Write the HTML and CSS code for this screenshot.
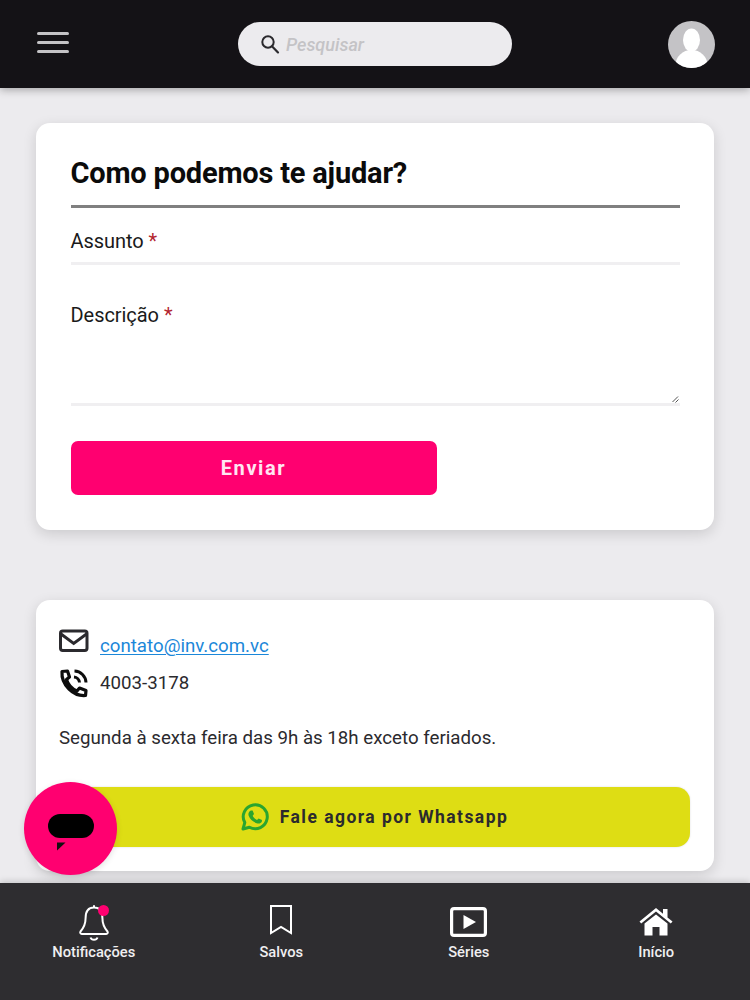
FILE: index.html
```html
<!DOCTYPE html>
<html lang="pt">
<head>
<meta charset="utf-8">
<title>Como podemos te ajudar?</title>
<link rel="stylesheet" href="styles.css">
</head>
<body>
<div class="app">
  <header class="topbar">
    <div class="burger"><span></span><span></span><span></span></div>
    <div class="search">
      <svg class="search-icon" width="20" height="20" viewBox="0 0 20 20"><circle cx="8" cy="8" r="5.7" fill="none" stroke="#2b2a2e" stroke-width="2"/><path d="M12.2 12.4 L18 18.4" stroke="#2b2a2e" stroke-width="2.2" stroke-linecap="round"/></svg>
      <span class="search-text">Pesquisar</span>
    </div>
    <svg class="avatar" width="47" height="47" viewBox="0 0 47 47"><defs><clipPath id="av"><circle cx="23.5" cy="23.5" r="23.5"/></clipPath></defs><circle cx="23.5" cy="23.5" r="23.5" fill="#c4c3c6"/><g clip-path="url(#av)" fill="#fff"><ellipse cx="23.5" cy="19" rx="8.5" ry="11.5"/><ellipse cx="23.5" cy="44" rx="16" ry="15"/></g></svg>
  </header>

  <main class="content">
    <section class="card form-card">
      <h1 class="title">Como podemos te ajudar?</h1>
      <div class="field field-subject"><span class="label">Assunto <em>*</em></span></div>
      <div class="field field-desc">
        <span class="label">Descrição <em>*</em></span>
        <svg class="grip" width="7" height="7" viewBox="0 0 7 7"><path d="M0.5 6 L6 0.5 M3.5 6.5 L6.5 3.5" stroke="#555" stroke-width="1"/></svg>
      </div>
      <button class="send">Enviar</button>
    </section>

    <section class="card contact-card">
      <div class="contact-row">
        <svg class="mail" width="30" height="24" viewBox="0 0 30 24"><rect x="1.5" y="2" width="26.5" height="19.5" rx="2.2" fill="none" stroke="#2b2a2e" stroke-width="3"/><path d="M2 5 L14.7 14.5 L27.5 5" fill="none" stroke="#2b2a2e" stroke-width="3"/></svg>
        <a class="mail-link" href="#">contato@inv.com.vc</a>
      </div>
      <div class="contact-row phone-row">
        <svg class="phone" width="30" height="30" viewBox="0 0 30 30"><path d="M8.5 3 L3 3.5 C2.5 10 5 16 10 21 C14 25 20 28 26.5 27.5 L27 22.5 L20.5 20 L18 23 C13 21 9 16.5 7.5 11.5 L10.5 9 Z" fill="none" stroke="#0d0d0d" stroke-width="3.2" stroke-linejoin="round"/><path d="M15 9 A6 6 0 0 1 20.5 14.5 M15.5 3 A12 12 0 0 1 27 14.5" fill="none" stroke="#0d0d0d" stroke-width="3"/></svg>
        <span class="phone-text">4003-3178</span>
      </div>
      <p class="hours">Segunda à sexta feira das 9h às 18h exceto feriados.</p>
      <button class="whats">
        <svg width="28" height="28" viewBox="0 0 28 28"><path d="M2 26 L3.8 19.6 A12 12 0 1 1 8.4 24.2 Z" fill="none" stroke="#2aa52f" stroke-width="3" stroke-linejoin="round"/><path d="M10 7.5 L11.6 7.6 L13 11 L11.7 12.8 C12.6 14.8 14 16 16 17 L17.6 15.4 L21 17 L20.8 18.8 C20 20.6 17.6 21 15.6 20.2 C11.6 18.8 9 16.2 7.6 12.6 C7 10.4 8 8.2 10 7.5 Z" fill="#2aa52f"/></svg>
        <span>Fale agora por Whatsapp</span>
      </button>
    </section>
  </main>

  <div class="fab">
    <div class="fab-pill"></div>
    <svg class="fab-tail" width="10" height="10" viewBox="0 0 10 10"><path d="M1 1.5 L9.5 1.5 L1 9.5 Z" fill="#111"/></svg>
  </div>

  <nav class="tabbar">
    <div class="tab">
      <span class="tab-icon bell">
        <svg width="34" height="38" viewBox="0 0 34 38"><path d="M17 3.5 C10.5 3.5 8.6 9 8.6 14 C8.6 20 7 23.5 3.5 27.5 C2.8 28.6 3.4 30 4.8 30 L29.2 30 C30.6 30 31.2 28.6 30.5 27.5 C27 23.5 25.4 20 25.4 14 C25.4 9 23.5 3.5 17 3.5 Z M17 3.5 L17 1.2" fill="none" stroke="#fff" stroke-width="2"/><path d="M13.5 33.5 C14.5 36.5 19.5 36.5 20.5 33.5" fill="none" stroke="#fff" stroke-width="2"/></svg>
        <i class="dot"></i>
      </span>
      <span class="tab-label">Notificações</span>
    </div>
    <div class="tab">
      <span class="tab-icon">
        <svg class="shift-save" width="24" height="32" viewBox="0 0 24 32"><path d="M2 2 L22 2 L22 29 L12 23 L2 29 Z" fill="none" stroke="#fff" stroke-width="2"/></svg>
      </span>
      <span class="tab-label">Salvos</span>
    </div>
    <div class="tab">
      <span class="tab-icon">
        <svg class="shift-up" width="37" height="30" viewBox="0 0 37 30"><rect x="1.6" y="1.6" width="33.8" height="26.8" rx="2.5" fill="none" stroke="#fff" stroke-width="3.2"/><path d="M13.5 8 L26 15 L13.5 22 Z" fill="#fff"/></svg>
      </span>
      <span class="tab-label">Séries</span>
    </div>
    <div class="tab">
      <span class="tab-icon">
        <svg class="shift-up" width="34" height="30" viewBox="0 0 34 30"><path d="M0.5 14.5 L17 1 L24 6.8 L24 2 L28.5 2 L28.5 10.5 L33.5 14.5 L31.8 16.5 L17 4.6 L2.2 16.5 Z" fill="#fff"/><path d="M5.5 16.5 L17 7.4 L28.5 16.5 L28.5 28.5 L20.5 28.5 L20.5 20 L13.5 20 L13.5 28.5 L5.5 28.5 Z" fill="#fff"/></svg>
      </span>
      <span class="tab-label">Início</span>
    </div>
  </nav>
</div>
</body>
</html>
```
FILE: styles.css
```css
* { box-sizing: border-box; }
html, body { margin: 0; padding: 0; }
body { font-family: Roboto, "Liberation Sans", sans-serif; background: #ecebee; }
.app { position: relative; width: 750px; height: 1000px; overflow: hidden; display: flex; flex-direction: column; background: #ecebee; }

.topbar { height: 88px; flex: none; background: #141216; display: flex; align-items: center; padding: 0 35px 0 37px; position: relative; box-shadow: 0 2px 8px rgba(0,0,0,.3); z-index: 2; }
.burger { width: 32px; display: flex; flex-direction: column; gap: 6px; margin-top: -3px; }
.burger span { height: 3px; border-radius: 2px; background: #c4c3c6; }
.search { position: absolute; left: 238px; top: 22px; width: 274px; height: 44px; border-radius: 22px; background: #ecebee; display: flex; align-items: center; padding-left: 22px; gap: 6px; }
.search-icon { margin-top: -1px; flex: none; }
.search-text { font-size: 18px; font-style: italic; color: #c4c3c6; font-weight: 500; }
.avatar { margin-left: auto; margin-top: 0; }

.content { flex: 1; padding: 35px 36px 0; display: flex; flex-direction: column; gap: 70px; }
.card { background: #fff; border-radius: 14px; box-shadow: 0 4px 14px rgba(0,0,0,.14); }
.form-card { height: 407px; padding: 32px 34.5px 0; }
.title { margin: 0; font-size: 29px; line-height: 36px; font-weight: 700; color: #0b0b0b; height: 53px; border-bottom: 3px solid #808080; letter-spacing: -.2px; }
.field { width: 100%; border-bottom: 3px solid #f0eff1; position: relative; }
.field-subject { height: 57px; padding-top: 21px; }
.field-desc { height: 141px; padding-top: 38px; }
.label { font-size: 20px; line-height: 24px; color: #1a1a1a; display: block; letter-spacing: -.05px; }
.label em { font-style: normal; color: #b3262f; }
.grip { position: absolute; right: 1px; bottom: 0; }
.send { display: block; margin-top: 35px; width: 366px; height: 54px; border: 0; border-radius: 7px; background: #ff0070; color: #ffe6f2; font: 700 20px Roboto, sans-serif; letter-spacing: 1.6px; padding-bottom: 2px; }

.contact-card { height: 271px; padding: 27px 24px 0 23px; }
.contact-row { display: flex; align-items: center; }
.mail { flex: none; margin-top: -3px; }
.mail-link { margin-left: 11px; margin-top: 7px; font-size: 18.7px; line-height: 24px; color: #1b87d9; text-decoration: underline; text-underline-offset: 2px; text-decoration-thickness: 1px; }
.phone-row { margin-top: 10px; }
.phone { flex: none; }
.phone-text { margin-left: 11px; font-size: 18.7px; line-height: 24px; color: #2b2a2e; }
.hours { margin: 27px 0 0; font-size: 18.7px; line-height: 26px; color: #2b2a2e; }
.whats { margin: 36px 0 0; width: 100%; height: 60px; border: 0; border-radius: 14px; background: #dedd14; display: flex; align-items: center; justify-content: center; gap: 11px; padding: 0; color: #2b2a2e; font: 700 17.5px Roboto, sans-serif; letter-spacing: 1.45px; box-shadow: 0 0 2px rgba(0,0,0,.15); }

.fab { position: absolute; left: 24px; top: 782px; width: 93px; height: 93px; border-radius: 50%; background: #ff0070; z-index: 3; box-shadow: 0 2px 6px rgba(0,0,0,.12); }
.fab-pill { position: absolute; left: 24px; top: 32px; width: 46px; height: 24px; border-radius: 12px; background: #000; }
.fab-tail { position: absolute; left: 32px; top: 59px; }

.tabbar { position: absolute; left: 0; right: 0; bottom: 0; height: 117px; background: #2e2d30; display: grid; grid-template-columns: repeat(4, 1fr); z-index: 2; box-shadow: 0 -2px 6px rgba(0,0,0,.15); }
.tab { display: flex; flex-direction: column; align-items: center; padding-top: 20px; }
.tab-icon { position: relative; height: 40px; display: flex; align-items: center; justify-content: center; }
.shift-save { margin-top: -6px; }
.shift-up { margin-top: -3px; }
.tab-label { margin-top: 0; font-size: 14.7px; line-height: 18px; font-weight: 500; color: #f0eff1; }
.dot { position: absolute; left: 21px; top: 2px; width: 11px; height: 11px; border-radius: 50%; background: #ff0070; }
```
